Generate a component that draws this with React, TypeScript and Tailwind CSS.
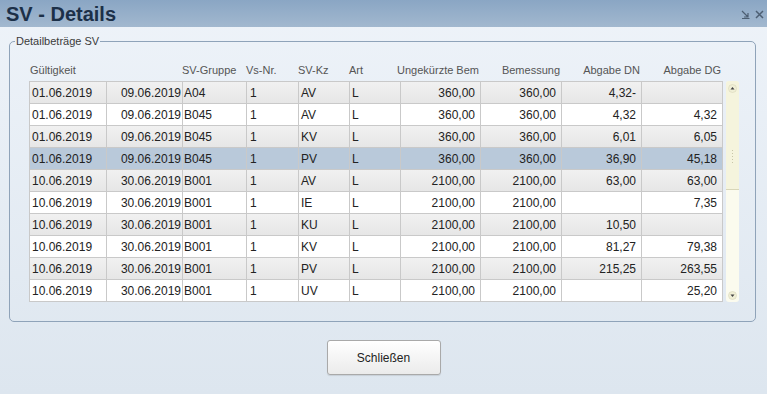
import React from "react";

type Row = {
	von: string;
	bis: string;
	gruppe: string;
	vs: string;
	kz: string;
	art: string;
	bem1: string;
	bem2: string;
	dn: string;
	dg: string;
};

const rows: Row[] = [
	{von: "01.06.2019", bis: "09.06.2019", gruppe: "A04", vs: "1", kz: "AV", art: "L", bem1: "360,00", bem2: "360,00", dn: "4,32-", dg: ""},
	{von: "01.06.2019", bis: "09.06.2019", gruppe: "B045", vs: "1", kz: "AV", art: "L", bem1: "360,00", bem2: "360,00", dn: "4,32", dg: "4,32"},
	{von: "01.06.2019", bis: "09.06.2019", gruppe: "B045", vs: "1", kz: "KV", art: "L", bem1: "360,00", bem2: "360,00", dn: "6,01", dg: "6,05"},
	{von: "01.06.2019", bis: "09.06.2019", gruppe: "B045", vs: "1", kz: "PV", art: "L", bem1: "360,00", bem2: "360,00", dn: "36,90", dg: "45,18"},
	{von: "10.06.2019", bis: "30.06.2019", gruppe: "B001", vs: "1", kz: "AV", art: "L", bem1: "2100,00", bem2: "2100,00", dn: "63,00", dg: "63,00"},
	{von: "10.06.2019", bis: "30.06.2019", gruppe: "B001", vs: "1", kz: "IE", art: "L", bem1: "2100,00", bem2: "2100,00", dn: "", dg: "7,35"},
	{von: "10.06.2019", bis: "30.06.2019", gruppe: "B001", vs: "1", kz: "KU", art: "L", bem1: "2100,00", bem2: "2100,00", dn: "10,50", dg: ""},
	{von: "10.06.2019", bis: "30.06.2019", gruppe: "B001", vs: "1", kz: "KV", art: "L", bem1: "2100,00", bem2: "2100,00", dn: "81,27", dg: "79,38"},
	{von: "10.06.2019", bis: "30.06.2019", gruppe: "B001", vs: "1", kz: "PV", art: "L", bem1: "2100,00", bem2: "2100,00", dn: "215,25", dg: "263,55"},
	{von: "10.06.2019", bis: "30.06.2019", gruppe: "B001", vs: "1", kz: "UV", art: "L", bem1: "2100,00", bem2: "2100,00", dn: "", dg: "25,20"},
];

// Spaltenbreiten wie im Original-Dialog
const cols = "grid-cols-[77px_76px_64px_52px_51px_51px_80px_81px_80px_81px]";

const Cell = ({children, right, cls}: {children?: React.ReactNode; right?: boolean; cls?: string}) => (
	<div
		className={`h-[22px] border-r border-b border-[#c9c9c9] leading-[22px] overflow-hidden whitespace-nowrap ${right ? "text-right pr-[5px]" : "pl-[2px]"} ${cls ?? ""}`}
	>
		{children}
	</div>
);

export default function App() {
	return (
		<div className="w-[767px] h-[394px] flex flex-col overflow-hidden bg-gradient-to-b from-[#eef3f9] to-[#dde6ef] font-['Liberation_Sans',Arial,sans-serif]">
			{/* Titelleiste */}
			<div className="h-[27px] shrink-0 flex items-center justify-between bg-gradient-to-b from-[#8aa6c4] to-[#a2b8cf] pl-[6px] pr-[3px]">
				<span className="text-[20px] font-bold text-[#1c3048] leading-none">SV - Details</span>
				<div className="flex items-center gap-[5px] pt-[2px]">
					<svg width="9" height="9" viewBox="0 0 9 9" fill="none" stroke="#4d5f73" strokeWidth="1.2">
						<path d="M1 1 L7 7 M7 3 L7 7 L3 7 M1 8.5 L8.5 8.5" />
					</svg>
					<svg width="9" height="9" viewBox="0 0 9 9" stroke="#4d5f73" strokeWidth="1.5">
						<path d="M1 1 L8 8 M8 1 L1 8" />
					</svg>
				</div>
			</div>

			<div className="flex-1 flex flex-col px-[9px] pt-[9px]">
				{/* Fieldset */}
				<fieldset className="w-[747px] h-[286px] border border-[#8fa3b9] rounded-[5px] pl-[19px] pt-[12px] m-0">
					<legend className="text-[11px] text-[#3b3b3b] ml-[-14px] px-[1px] leading-none">Detailbeträge SV</legend>

					<div className={`grid ${cols} text-[11px] text-[#555] h-[22px] items-center whitespace-nowrap`}>
						<div className="pl-[1px]">Gültigkeit</div>
						<div />
						<div>SV-Gruppe</div>
						<div>Vs-Nr.</div>
						<div>SV-Kz</div>
						<div>Art</div>
						<div className="flex justify-end pr-[1px]">Ungekürzte Bem</div>
						<div className="text-right pr-[1px]">Bemessung</div>
						<div className="text-right pr-[1px]">Abgabe DN</div>
						<div className="text-right pr-[1px]">Abgabe DG</div>
					</div>

					<div className="flex">
						<div className="border-l border-t border-[#c9c9c9] text-[12px] text-[#222]">
							{rows.map((r, i) => {
								const bg =
									i === 3
										? "bg-[#b9c9da]"
										: i % 2 === 0
											? "bg-gradient-to-b from-[#f1f1f1] to-[#e6e6e6]"
											: "bg-white";
								return (
									<div key={i} className={`grid ${cols} ${bg}`}>
										<Cell>{r.von}</Cell>
										<Cell right cls="!pr-[1px]">{r.bis}</Cell>
										<Cell cls="!pl-[1px]">{r.gruppe}</Cell>
										<Cell cls="!pl-[3px]">{r.vs}</Cell>
										<Cell>{r.kz}</Cell>
										<Cell>{r.art}</Cell>
										<Cell right>{r.bem1}</Cell>
										<Cell right>{r.bem2}</Cell>
										<Cell right>{r.dn}</Cell>
										<Cell right>{r.dg}</Cell>
									</div>
								);
							})}
						</div>

						{/* Scrollbar */}
						<div className="ml-[3px] w-[13px] h-[221px] flex flex-col bg-[#fbfbee] rounded-[3px]">
							<div className="h-[109px] bg-[#f5f4dd] border-b border-[#d8d6b8] rounded-t-[3px] flex flex-col items-center">
								<svg width="9" height="9" viewBox="0 0 9 9" className="mt-[3px]">
									<circle cx="4.5" cy="4.5" r="4" fill="#f0efd6" stroke="#d9d7bb" strokeWidth="0.6" />
									<path d="M2.5 5.5 L4.5 3 L6.5 5.5 Z" fill="#444" />
								</svg>
								<div className="flex-1 flex flex-col items-center justify-center gap-[2px] pt-[30px]">
									{[0, 1, 2, 3, 4].map((d) => (
										<div key={d} className="w-[1px] h-[1px] bg-[#c8c6a8]" />
									))}
								</div>
							</div>
							<div className="flex-1" />
							<div className="flex justify-center pb-[2px]">
								<svg width="9" height="9" viewBox="0 0 9 9">
									<circle cx="4.5" cy="4.5" r="4" fill="#f0efd6" stroke="#d9d7bb" strokeWidth="0.6" />
									<path d="M2.5 3.5 L4.5 6 L6.5 3.5 Z" fill="#444" />
								</svg>
							</div>
						</div>
					</div>
				</fieldset>

				<div className="flex justify-center pt-[18px]">
					<button className="w-[114px] h-[35px] rounded-[3px] border border-[#a9a9a9] bg-gradient-to-b from-white to-[#ebebeb] text-[12px] text-[#222] shadow-[0_1px_1px_rgba(0,0,0,0.1)]">
						Schließen
					</button>
				</div>
			</div>
		</div>
	);
}
